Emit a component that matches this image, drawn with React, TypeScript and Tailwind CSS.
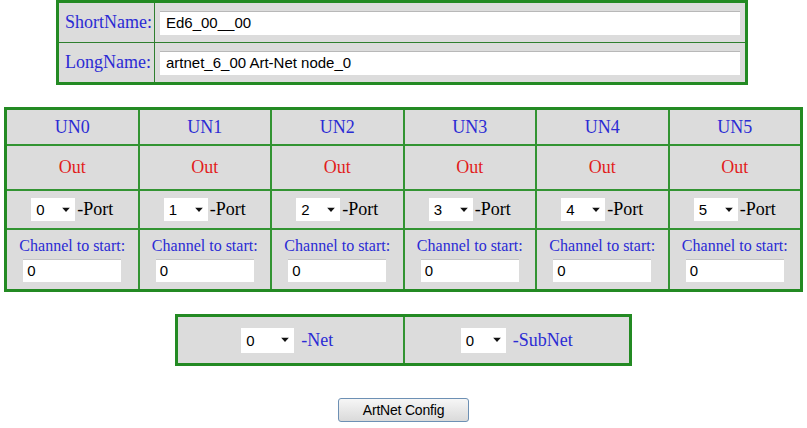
import React from "react";

const serif = "font-['Liberation_Serif','Times_New_Roman',serif]";
const sans = "font-['Liberation_Sans',Arial,sans-serif]";

function Sel({ value, w, h }: { value: string; w: number; h: number }) {
  return (
    <div
      className={`${sans} relative flex items-center bg-white text-[15px] text-black pl-[5px] shrink-0`}
      style={{ width: w, height: h }}
    >
      <span className="leading-none">{value}</span>
      <svg
        className="absolute right-[5px] top-1/2 -translate-y-1/2"
        width="8"
        height="5"
        viewBox="0 0 8 5"
      >
        <path d="M0 0 L8 0 L4 4.5 Z" fill="#111" />
      </svg>
    </div>
  );
}

export default function App() {
  const units = [0, 1, 2, 3, 4, 5];
  return (
    <div className="w-[807px] h-[428px] bg-white flex flex-col items-center overflow-hidden">
      {/* Top name table */}
      <div className="self-start ml-[56px] w-[692px] border-[3px] border-[#238a23] bg-[#2f7f2f] grid grid-cols-[95px_1fr] grid-rows-[39px_39px] gap-[1px]">
        <div className={`${serif} bg-[#dcdcdc] flex items-center pl-[6px] text-[18px] text-[#2b2bd4]`}>
          ShortName:
        </div>
        <div className="bg-[#dcdcdc] flex items-center px-[5px]">
          <div className={`${sans} w-full h-[24px] bg-white border-t border-[#b8b8b8] flex items-center pl-[6px] text-[15px] text-black`}>
            Ed6_00__00
          </div>
        </div>
        <div className={`${serif} bg-[#dcdcdc] flex items-center pl-[6px] text-[18px] text-[#2b2bd4]`}>
          LongName:
        </div>
        <div className="bg-[#dcdcdc] flex items-center px-[5px]">
          <div className={`${sans} w-full h-[24px] bg-white border-t border-[#b8b8b8] flex items-center pl-[6px] text-[15px] text-black`}>
            artnet_6_00 Art-Net node_0
          </div>
        </div>
      </div>

      {/* Universe table */}
      <div className="mt-[22px] w-[799px] border-[3px] border-[#238a23] bg-[#339433] grid grid-cols-6 grid-rows-[34px_43px_37px_59px] gap-[2px]">
        {units.map((u) => (
          <div
            key={`h${u}`}
            className={`${serif} bg-[#dcdcdc] flex items-center justify-center text-[18px] text-[#2b2bd4]`}
          >
            UN{u}
          </div>
        ))}
        {units.map((u) => (
          <div
            key={`o${u}`}
            className={`${serif} bg-[#dcdcdc] flex items-center justify-center text-[18px] text-[#e21c1c]`}
          >
            Out
          </div>
        ))}
        {units.map((u) => (
          <div key={`p${u}`} className="bg-[#dcdcdc] flex items-center justify-center gap-[2px]">
            <Sel value={String(u)} w={44} h={23} />
            <span className={`${serif} text-[18px] text-black`}>-Port</span>
          </div>
        ))}
        {units.map((u) => (
          <div key={`c${u}`} className="bg-[#dcdcdc] flex flex-col items-center justify-center gap-[4px]">
            <span className={`${serif} text-[16px] leading-[18px] text-[#2b2bd4] whitespace-nowrap`}>
              Channel to start:
            </span>
            <div className={`${sans} w-[98px] h-[23px] bg-white border-t border-[#c4c4c4] flex items-center pl-[4px] text-[15px] text-black`}>
              0
            </div>
          </div>
        ))}
      </div>

      {/* Net / SubNet table */}
      <div className="mt-[22px] w-[457px] h-[52px] border-[3px] border-[#238a23] bg-[#339433] grid grid-cols-2 gap-[2px]">
        <div className="bg-[#dcdcdc] flex items-center justify-center gap-[7px] pr-[6px]">
          <Sel value="0" w={53} h={25} />
          <span className={`${serif} text-[18px] text-[#2b2bd4]`}>-Net</span>
        </div>
        <div className="bg-[#dcdcdc] flex items-center justify-center gap-[7px]">
          <Sel value="0" w={45} h={25} />
          <span className={`${serif} text-[18px] text-[#2b2bd4]`}>-SubNet</span>
        </div>
      </div>

      {/* Button */}
      <button
        className={`${sans} mt-[32px] w-[131px] h-[24px] rounded-[3px] border border-[#6d90b4] bg-gradient-to-b from-[#f6f6f6] to-[#dadada] text-[14px] text-black tracking-[-0.2px] flex items-center justify-center`}
      >
        ArtNet Config
      </button>
    </div>
  );
}
